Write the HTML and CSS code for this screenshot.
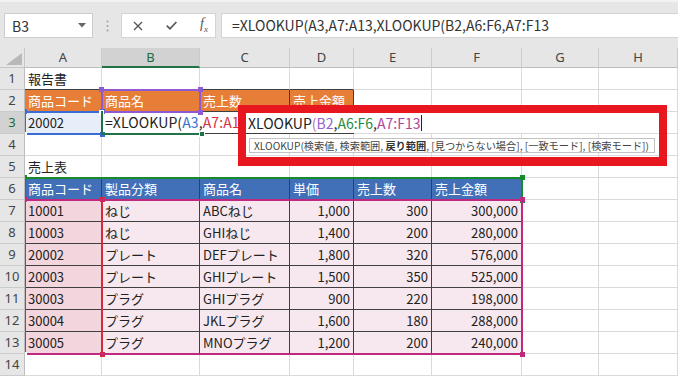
FILE: index.html
```html
<!DOCTYPE html>
<html lang="ja">
<head>
<meta charset="utf-8">
<title>XLOOKUP</title>
<link rel="stylesheet" href="styles.css">
</head>
<body>
<div class="app">
  <div class="toolbar">
    <div class="namebox"><span>B3</span><svg class="dd" width="8" height="5" viewBox="0 0 8 5"><polygon points="0,0 8,0 4,4.5" fill="#666"/></svg></div>
    <div class="sep"><svg width="3" height="12" viewBox="0 0 3 12"><circle cx="1.5" cy="1.5" r="1" fill="#a0a0a0"/><circle cx="1.5" cy="6" r="1" fill="#a0a0a0"/><circle cx="1.5" cy="10.5" r="1" fill="#a0a0a0"/></svg></div>
    <div class="fbtns">
      <svg class="ic" width="10" height="10" viewBox="0 0 10 10"><path d="M1 1 L9 9 M9 1 L1 9" stroke="#555" stroke-width="1.3" fill="none"/></svg>
      <svg class="ic" width="11" height="9" viewBox="0 0 11 9"><path d="M0.8 4.6 L4 7.8 L10.4 1" stroke="#555" stroke-width="1.7" fill="none"/></svg>
      <span class="fx">f<sub>x</sub></span>
    </div>
    <div class="formula">=XLOOKUP(A3,A7:A13,XLOOKUP(B2,A6:F6,A7:F13</div>
  </div>

  <div class="sheet">
    <div class="corner"><svg width="16" height="12" viewBox="0 0 16 12"><polygon points="16,0 16,12 0,12" fill="#b8b8b8"/></svg></div>
    <div class="ch">A</div><div class="ch sel">B</div><div class="ch">C</div><div class="ch">D</div><div class="ch">E</div><div class="ch">F</div><div class="ch">G</div><div class="ch">H</div>

    <div class="rh">1</div><div class="c bt">報告書</div><div class="c bt"></div><div class="c bt"></div><div class="c bt"></div><div class="c"></div><div class="c"></div><div class="c"></div><div class="c"></div>

    <div class="rh">2</div><div class="c bd or">商品コード</div><div class="c bd or">商品名</div><div class="c bd or">売上数</div><div class="c bd or">売上金額</div><div class="c"></div><div class="c"></div><div class="c"></div><div class="c"></div>

    <div class="rh sel">3</div><div class="c bd tb">20002</div><div class="c bd act"><span class="ftxt">=XLOOKUP(<span class="k-b">A3</span>,<span class="k-r">A7:A1</span></span></div><div class="c bd"></div><div class="c bd"></div><div class="c"></div><div class="c"></div><div class="c"></div><div class="c"></div>

    <div class="rh">4</div><div class="c"></div><div class="c"></div><div class="c"></div><div class="c"></div><div class="c"></div><div class="c"></div><div class="c"></div><div class="c"></div>

    <div class="rh">5</div><div class="c bt">売上表</div><div class="c bt"></div><div class="c bt"></div><div class="c bt"></div><div class="c bt"></div><div class="c bt"></div><div class="c"></div><div class="c"></div>

    <div class="rh">6</div><div class="c bd bl">商品コード</div><div class="c bd bl">製品分類</div><div class="c bd bl">商品名</div><div class="c bd bl">単価</div><div class="c bd bl">売上数</div><div class="c bd bl">売上金額</div><div class="c"></div><div class="c"></div>

    <div class="rh">7</div><div class="c bd pa">10001</div><div class="c bd pk">ねじ</div><div class="c bd pk">ABCねじ</div><div class="c bd pk num">1,000</div><div class="c bd pk num">300</div><div class="c bd pk num">300,000</div><div class="c"></div><div class="c"></div>

    <div class="rh">8</div><div class="c bd pa">10003</div><div class="c bd pk">ねじ</div><div class="c bd pk">GHIねじ</div><div class="c bd pk num">1,400</div><div class="c bd pk num">200</div><div class="c bd pk num">280,000</div><div class="c"></div><div class="c"></div>

    <div class="rh">9</div><div class="c bd pa">20002</div><div class="c bd pk">プレート</div><div class="c bd pk">DEFプレート</div><div class="c bd pk num">1,800</div><div class="c bd pk num">320</div><div class="c bd pk num">576,000</div><div class="c"></div><div class="c"></div>

    <div class="rh">10</div><div class="c bd pa">20003</div><div class="c bd pk">プレート</div><div class="c bd pk">GHIプレート</div><div class="c bd pk num">1,500</div><div class="c bd pk num">350</div><div class="c bd pk num">525,000</div><div class="c"></div><div class="c"></div>

    <div class="rh">11</div><div class="c bd pa">30003</div><div class="c bd pk">プラグ</div><div class="c bd pk">GHIプラグ</div><div class="c bd pk num">900</div><div class="c bd pk num">220</div><div class="c bd pk num">198,000</div><div class="c"></div><div class="c"></div>

    <div class="rh">12</div><div class="c bd pa">30004</div><div class="c bd pk">プラグ</div><div class="c bd pk">JKLプラグ</div><div class="c bd pk num">1,600</div><div class="c bd pk num">180</div><div class="c bd pk num">288,000</div><div class="c"></div><div class="c"></div>

    <div class="rh">13</div><div class="c bd pa">30005</div><div class="c bd pk">プラグ</div><div class="c bd pk">MNOプラグ</div><div class="c bd pk num">1,200</div><div class="c bd pk num">200</div><div class="c bd pk num">240,000</div><div class="c"></div><div class="c"></div>

    <div class="rh">14</div><div class="c"></div><div class="c"></div><div class="c"></div><div class="c"></div><div class="c"></div><div class="c"></div><div class="c"></div><div class="c"></div>

    <div class="ovl">
      <div class="rng r-blue" style="left:-1px;top:43px;width:79px;height:24px"><i class="h tl"></i><i class="h tr"></i><i class="h bl"></i><i class="h br"></i></div>
      <div class="rng r-purple" style="left:76px;top:21px;width:100px;height:24px"><i class="h tl"></i><i class="h tr"></i><i class="h bl"></i><i class="h br"></i></div>
      <div class="rng r-green" style="left:-1px;top:109px;width:499px;height:24px"><i class="h tl"></i><i class="h tr"></i><i class="h bl"></i><i class="h br"></i></div>
      <div class="rng r-red" style="left:-1px;top:131px;width:79px;height:156px"><i class="h tl"></i><i class="h tr"></i><i class="h bl"></i><i class="h br"></i></div>
      <div class="rng r-mag" style="left:-1px;top:131px;width:499px;height:156px"><i class="h tl"></i><i class="h tr"></i><i class="h bl"></i><i class="h br"></i></div>
      <div class="active" style="left:76px;top:43px;width:100px;height:24px"><i class="fill"></i></div>

      <div class="callout">
        <div class="editor">XLOOKUP<span class="k-paren">(</span><span class="k-p">B2</span>,<span class="k-g">A6:F6</span>,<span class="k-m">A7:F13</span><span class="cursor"></span></div>
        <div class="tip">XLOOKUP(検索値, 検索範囲, <b>戻り範囲</b>, [見つからない場合], [一致モード], [検索モード])</div>
      </div>
    </div>
  </div>
</div>
</body>
</html>
```

FILE: styles.css
```css
* { box-sizing: border-box; }

body {
  margin: 0;
  width: 678px;
  height: 378px;
  overflow: hidden;
  background: #fff;
  font-family: "Noto Sans CJK JP", "Noto Sans", sans-serif;
}

.app {
  width: 678px;
  height: 378px;
  overflow: hidden;
}

/* ---------- toolbar ---------- */
.toolbar {
  height: 48px;
  background: #e6e6e6;
  border-top: 2px solid #f2f2f2;
  display: flex;
  align-items: flex-start;
  padding: 11px 0 0 4px;
}

.namebox {
  width: 89px;
  height: 25px;
  background: #fff;
  border: 1px solid #cdcdcd;
  display: flex;
  align-items: center;
  justify-content: space-between;
  padding: 0 6px 0 7px;
  font-size: 14px;
  color: #333;
}

.sep {
  width: 28px;
  height: 25px;
  display: flex;
  align-items: center;
  justify-content: center;
}

.fbtns {
  width: 95px;
  height: 25px;
  background: #fff;
  border: 1px solid #d4d4d4;
  display: flex;
  align-items: center;
  padding-left: 11px;
  gap: 23px;
}

.fx {
  font-family: "Liberation Serif", serif;
  font-style: italic;
  font-size: 14px;
  color: #555;
  line-height: 1;
}
.fx sub { font-size: 9px; }

.formula {
  flex: 1;
  height: 25px;
  margin-left: 5px;
  margin-right: -2px;
  background: #fff;
  border: 1px solid #d4d4d4;
  padding-left: 10px;
  font-size: 14px;
  line-height: 23px;
  color: #333;
  white-space: nowrap;
  overflow: hidden;
}

/* ---------- sheet ---------- */
.sheet {
  position: relative;
  display: grid;
  grid-template-columns: 25px 77px 98px 90px 64px 78px 90px 77px 1fr;
  grid-template-rows: 20px;
  grid-auto-rows: 22px;
}

.corner {
  background: #e6e6e6;
  border-right: 1px solid #c6c6c6;
  border-bottom: 1px solid #c6c6c6;
  display: flex;
  align-items: flex-end;
  justify-content: flex-end;
  padding: 0 2px 2px 0;
}

.ch {
  background: #e6e6e6;
  border-right: 1px solid #cbcbcb;
  border-bottom: 1px solid #bdbdbd;
  text-align: center;
  font-family: "Noto Sans", sans-serif;
  font-size: 13px;
  line-height: 19px;
  color: #444;
}
.ch.sel {
  background: #d2d2d2;
  border-bottom: 2px solid #217346;
  color: #1e6b3b;
  line-height: 18px;
}

.rh {
  background: #e6e6e6;
  border-right: 1px solid #bdbdbd;
  border-bottom: 1px solid #cbcbcb;
  text-align: center;
  font-family: "Noto Sans", sans-serif;
  font-size: 13px;
  line-height: 21px;
  color: #444;
}
.rh.sel {
  background: #d2d2d2;
  color: #1e6b3b;
}

.c {
  border-right: 1px solid #dadada;
  border-bottom: 1px solid #dadada;
  padding: 0 3px;
  font-size: 13px;
  line-height: 21px;
  white-space: nowrap;
  color: #222;
  min-width: 0;
}

.bd { border-right-color: #3f3f3f; border-bottom-color: #3f3f3f; }
.bt { border-bottom-color: #3f3f3f; }

.or { background: #e67e38; color: #fff; }
.bl { background: #4270b8; color: #fff; }
.tb { background: #e8eef9; }
.pa { background: #f3d6dd; }
.pk { background: #f7e8ef; }
.num { text-align: right; }
.act { border-right-color: transparent; }

.ftxt {
  font-size: 14px;
  letter-spacing: 0.1px;
}

.k-b { color: #3b6fd4; }
.k-r { color: #d2343e; }
.k-p { color: #9563cf; }
.k-g { color: #2b8a3e; }
.k-m { color: #b3449a; }
.k-paren { color: #b46fc2; }

/* ---------- reference overlays ---------- */
.ovl {
  position: absolute;
  left: 25px;
  top: 20px;
  right: 0;
  bottom: 0;
  overflow: hidden;
}

.rng {
  position: absolute;
  border: 2px solid currentColor;
}
.r-blue { color: #3a6cd6; }
.r-purple { color: #8e5ad3; }
.r-green { color: #178a2c; }
.r-red { color: #d42b3c; }
.r-mag { color: #c02a7e; }

.h {
  position: absolute;
  width: 5px;
  height: 5px;
  background: currentColor;
}
.tl { left: -4px; top: -4px; }
.tr { right: -4px; top: -4px; }
.bl.h { left: -4px; bottom: -4px; }
.br { right: -4px; bottom: -4px; }

.active {
  position: absolute;
  border-left: 2px solid #217346;
  border-bottom: 2px solid #217346;
}
.fill {
  position: absolute;
  right: -4px;
  bottom: -4px;
  width: 6px;
  height: 6px;
  background: #217346;
  border: 1px solid #fff;
}

/* ---------- callout ---------- */
.callout {
  position: absolute;
  left: 213px;
  top: 37px;
  width: 429px;
  height: 61px;
  border: 8px solid #e8161f;
  border-bottom-width: 9px;
  display: flex;
  flex-direction: column;
  align-items: flex-start;
}

.editor {
  align-self: stretch;
  height: 20px;
  background: #fff;
  padding-left: 2px;
  font-size: 14px;
  line-height: 20px;
  color: #222;
  white-space: nowrap;
  display: flex;
  align-items: center;
}
.cursor {
  display: inline-block;
  width: 1px;
  height: 16px;
  background: #222;
  margin-left: 1px;
}

.tip {
  margin: 5px 0 0 3px;
  width: 406px;
  height: 15px;
  background: #fff;
  border: 1px solid #c2c2c2;
  font-size: 10.2px;
  line-height: 13px;
  padding: 0 4px;
  color: #444;
  white-space: nowrap;
  overflow: hidden;
}
.tip b { font-weight: 700; color: #333; }
```
